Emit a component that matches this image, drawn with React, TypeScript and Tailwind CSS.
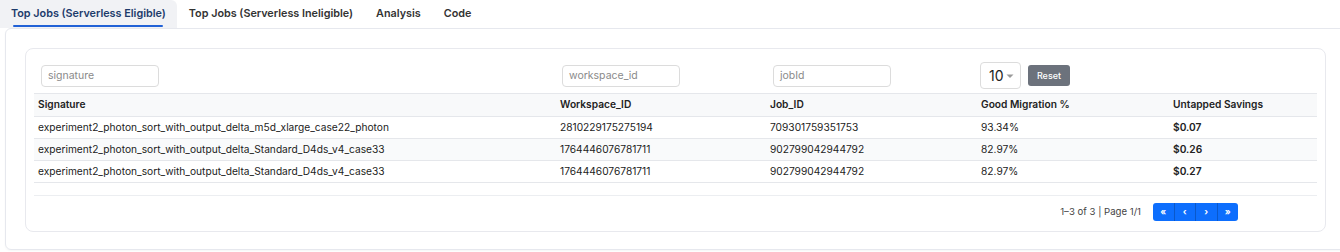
import React from "react";

const cols = "grid grid-cols-[522px_210px_211px_192px_147px]";

const rows = [
  ["experiment2_photon_sort_with_output_delta_m5d_xlarge_case22_photon", "2810229175275194", "709301759351753", "93.34%", "$0.07"],
  ["experiment2_photon_sort_with_output_delta_Standard_D4ds_v4_case33", "1764446076781711", "902799042944792", "82.97%", "$0.26"],
  ["experiment2_photon_sort_with_output_delta_Standard_D4ds_v4_case33", "1764446076781711", "902799042944792", "82.97%", "$0.27"],
];

function FilterInput({ placeholder }: { placeholder: string }) {
  return (
    <div className="h-[22px] w-[118px] rounded-[4px] border border-[#dcdcdc] bg-white pl-[6px] flex items-center text-[10.5px] text-[#8a8a8a]">
      {placeholder}
    </div>
  );
}

export default function App() {
  return (
    <div className="w-[1340px] h-[252px] overflow-hidden bg-white text-[#222] font-['Inter','Noto_Sans',sans-serif]">
      {/* Tabs */}
      <div className="flex h-[28px] items-stretch text-[10.8px] font-semibold">
        <div className="relative flex items-center bg-[#f1f2f5] pl-[11px] pr-[11px] text-[#1d3b6b] rounded-tr-[6px]">
          Top Jobs (Serverless Eligible)
          <div className="absolute left-[13px] right-[14px] bottom-[1px] h-[2.5px] rounded-full bg-[#2161d6]" />
        </div>
        <div className="flex items-center pl-[12px] pr-[11px] text-[#333]">Top Jobs (Serverless Ineligible)</div>
        <div className="flex items-center pl-[12px] pr-[11px] text-[#333]">Analysis</div>
        <div className="flex items-center pl-[12px] pr-[11px] text-[#333]">Code</div>
      </div>

      {/* Outer panel */}
      <div className="ml-[5px] w-[1350px] h-[222px] rounded-[6px] border border-[#e6e8ee] pl-[19px] pt-[19px] shadow-[0_1px_2px_rgba(0,0,0,0.04)]">
        {/* Inner card */}
        <div className="w-[1301px] h-[184px] rounded-[8px] border border-[#e8e9ee] bg-white px-[8px] pt-[13px]">
          {/* Filters */}
          <div className={`${cols} h-[27px] items-center`}>
            <div className="pl-[7px]"><FilterInput placeholder="signature" /></div>
            <div className="pl-[6px]"><FilterInput placeholder="workspace_id" /></div>
            <div className="pl-[7px]"><FilterInput placeholder="jobId" /></div>
            <div className="flex items-center gap-[7px] pl-[3px] col-span-2">
              <div className="h-[27px] w-[41px] rounded-[4px] border border-[#dcdcdc] flex items-center pl-[8px] gap-[2px] text-[14px] text-[#222]">
                10
                <svg width="8" height="5" viewBox="0 0 8 5" className="mt-[1px]"><path d="M0.5 0.5 L4 4 L7.5 0.5 Z" fill="#9a9a9a" /></svg>
              </div>
              <div className="h-[21px] w-[42px] rounded-[3px] bg-[#6c727c] flex items-center justify-center text-[9px] font-medium text-white">
                Reset
              </div>
            </div>
          </div>

          {/* Table */}
          <div className="mt-[4px] text-[10.2px]">
            <div className={`${cols} h-[24px] items-center border-y border-[#e5e7eb] bg-[#f8f9fa] font-semibold`}>
              {["Signature", "Workspace_ID", "Job_ID", "Good Migration %", "Untapped Savings"].map((h) => (
                <div key={h} className="pl-[4px]">{h}</div>
              ))}
            </div>
            {rows.map((r, i) => (
              <div
                key={i}
                className={`${cols} h-[22px] items-center border-b border-[#e5e7eb] ${i === 1 ? "bg-[#f9fafb]" : "bg-white"}`}
              >
                {r.map((c, j) => (
                  <div key={j} className={`pl-[4px] ${j === 4 ? "font-semibold" : ""}`}>{c}</div>
                ))}
              </div>
            ))}
            <div className="h-[13px] border-b border-[#eceef1]" />
          </div>

          {/* Pagination */}
          <div className="flex items-center justify-end pr-[79px] pt-[7px] gap-[12px]">
            <div className="text-[9.6px] text-[#444]">1–3 of 3 | Page 1/1</div>
            <div className="flex h-[18px] w-[85px] overflow-hidden rounded-[3px] bg-[#0d6efd] text-white text-[9px] font-bold">
              {["«", "‹", "›", "»"].map((g, i) => (
                <div key={i} className={`flex flex-1 items-center justify-center ${i > 0 ? "border-l border-[#0a58ca]" : ""}`}>
                  {g}
                </div>
              ))}
            </div>
          </div>
        </div>
      </div>
    </div>
  );
}
